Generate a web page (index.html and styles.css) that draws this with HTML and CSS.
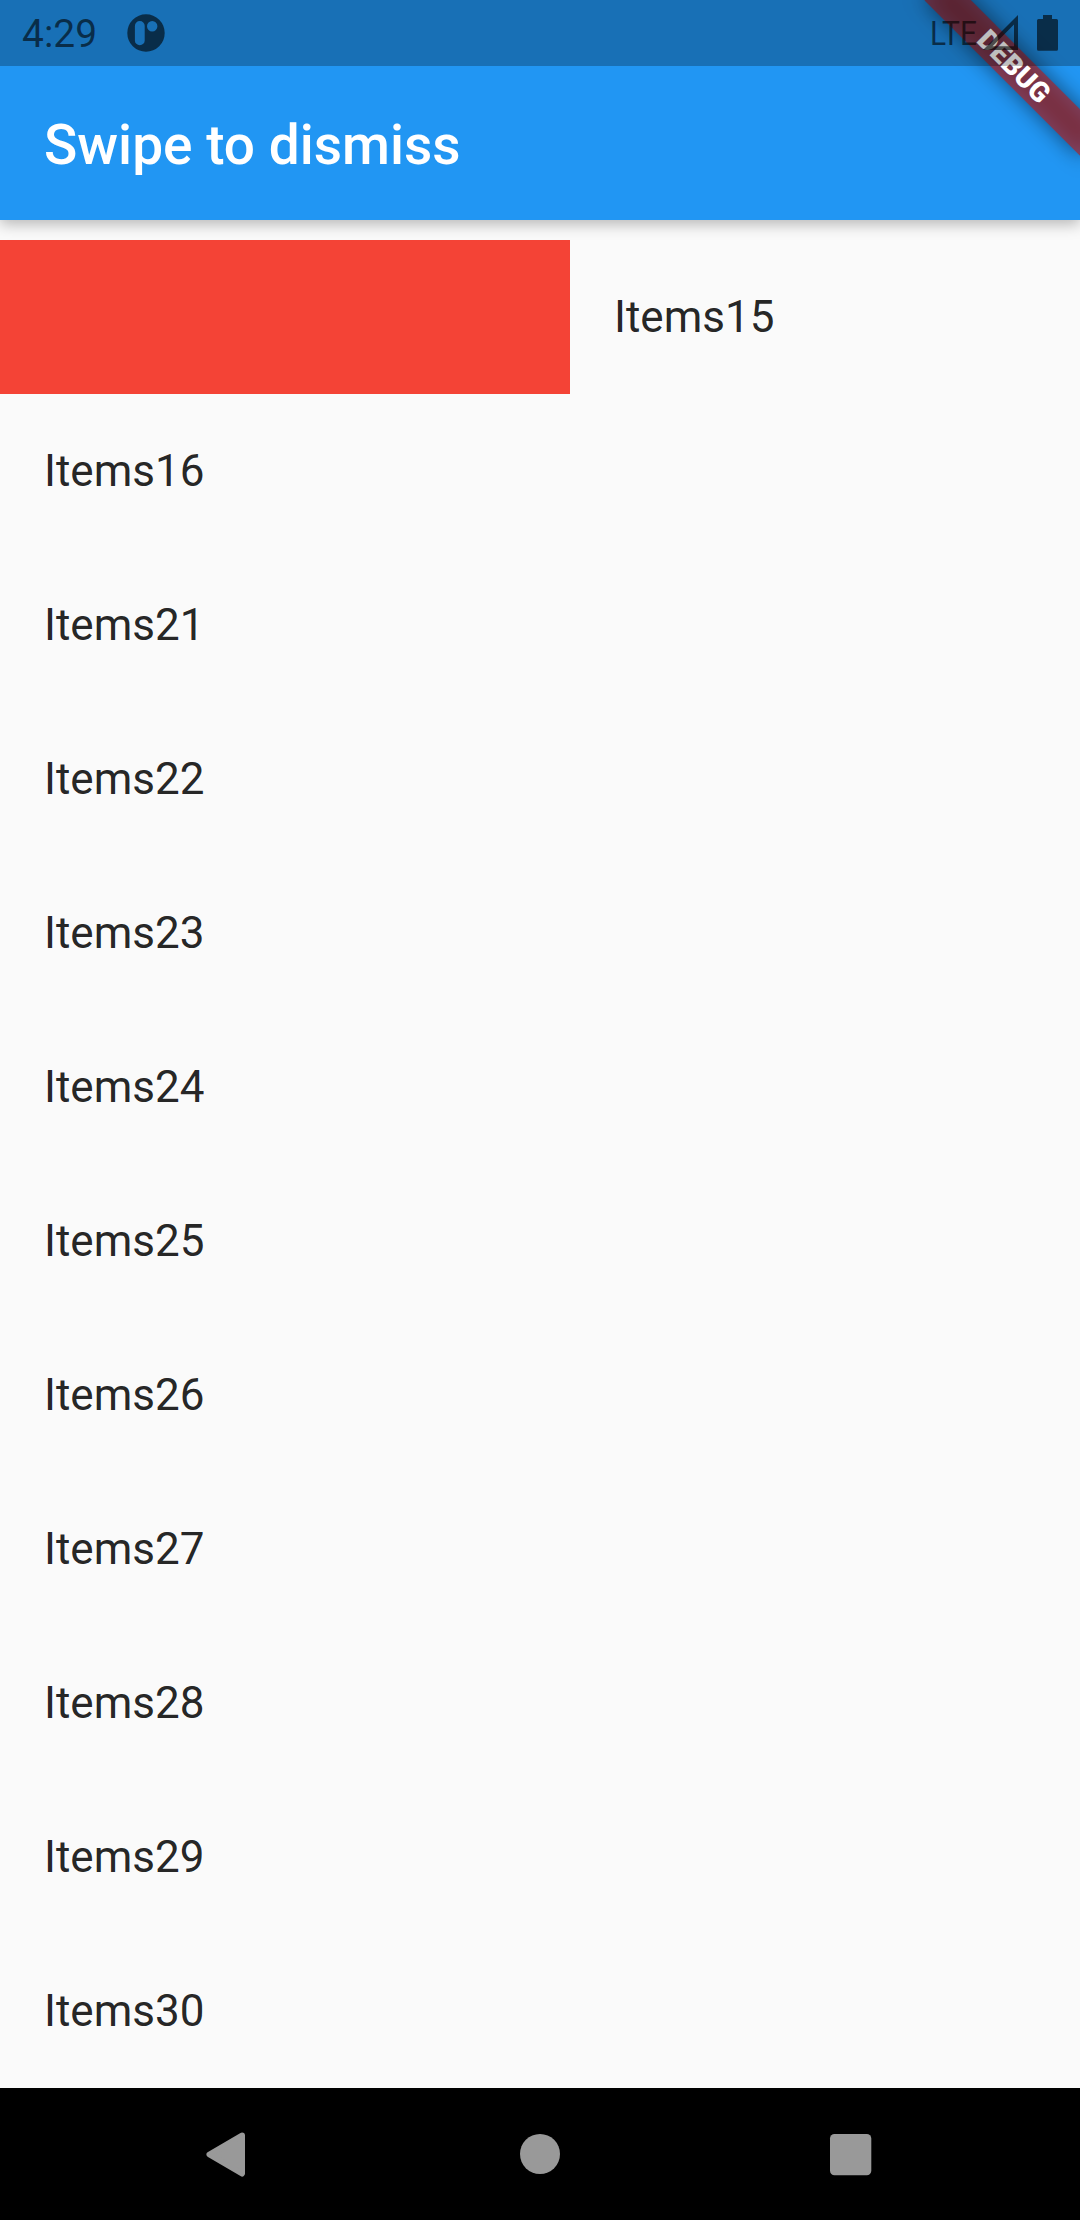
FILE: index.html
```html
<!DOCTYPE html>
<html lang="en">
<head>
<meta charset="utf-8">
<title>Swipe to dismiss</title>
<link rel="stylesheet" href="styles.css">
</head>
<body>
<div class="screen">
  <header class="app-header">
    <h1 class="title">Swipe to dismiss</h1>
  </header>

  <div class="banner-clip">
    <div class="banner"><span class="banner-text">DEBUG</span></div>
  </div>

  <div class="status-bar">
    <span class="clock">4:29</span>
    <svg class="app-icon" width="38" height="38" viewBox="0 0 38 38">
      <path fill-rule="evenodd" d="M19 .3a18.7 18.7 0 1 0 0 37.4a18.7 18.7 0 1 0 0-37.4zM12.8 7a4.9 4.9 0 0 1 4.9 4.9v14.5a4.9 4.9 0 0 1-9.8 0V11.9a4.9 4.9 0 0 1 4.9-4.9zM25.2 7a5.2 5.2 0 1 1 0 10.4a5.2 5.2 0 1 1 0-10.4z"/>
    </svg>
    <svg class="network" width="52" height="44" viewBox="0 0 52 44">
      <text x="0" y="33.5" textLength="47" lengthAdjust="spacingAndGlyphs">LTE</text>
    </svg>
    <svg class="signal" width="36" height="36" viewBox="0 0 36 36">
      <path fill-rule="evenodd" d="M0 35L35 0V35zM9.5 31.3H31V9.5z"/>
    </svg>
    <svg class="battery" width="21" height="36" viewBox="0 0 21 36">
      <path d="M6 0h9v4h4.5a1.5 1.5 0 0 1 1.5 1.5v28.7a1.5 1.5 0 0 1-1.5 1.5h-18a1.5 1.5 0 0 1-1.5-1.5V5.5a1.5 1.5 0 0 1 1.500-1.500H6z"/>
    </svg>
  </div>

  <main class="list">
    <div class="dismissible"><div class="dismiss-background"></div><div class="item">Items15</div></div>
    <div class="item">Items16</div>
    <div class="item">Items21</div>
    <div class="item">Items22</div>
    <div class="item">Items23</div>
    <div class="item">Items24</div>
    <div class="item">Items25</div>
    <div class="item">Items26</div>
    <div class="item">Items27</div>
    <div class="item">Items28</div>
    <div class="item">Items29</div>
    <div class="item">Items30</div>
  </main>

  <nav class="nav-bar">
    <svg width="60" height="60" viewBox="0 0 60 60"><path d="M42 11.500L9.500 30.500L42 49.500z" stroke-width="6" stroke-linejoin="round"/></svg>
    <svg width="60" height="60" viewBox="0 0 60 60"><circle cx="30" cy="30" r="20"/></svg>
    <svg width="60" height="60" viewBox="0 0 60 60"><rect x="10" y="10" width="41.300" height="41.300" rx="4.500"/></svg>
  </nav>
</div>
</body>
</html>
```
FILE: styles.css
```css
* { box-sizing: border-box; }

body {
  margin: 0;
  background: #fafafa;
  font-family: Roboto, "Liberation Sans", sans-serif;
}

.screen {
  position: relative;
  display: flex;
  flex-direction: column;
  width: 1080px;
  height: 2220px;
  overflow: hidden;
}

.app-header {
  display: flex;
  align-items: center;
  height: 220px;
  padding: 70px 44px 0;
  background: #2196f3;
  color: #fff;
  box-shadow: 0 4px 14px rgba(0, 0, 0, 0.28);
}

.title {
  margin: 0;
  font-size: 55px;
  font-weight: 500;
  line-height: 64px;
}

/* Translucent system bar drawn over the app */
.status-bar {
  position: absolute;
  top: 0;
  left: 0;
  display: flex;
  width: 1080px;
  height: 66px;
  padding: 0 22px;
  background: rgba(0, 0, 0, 0.25);
  color: rgba(0, 0, 0, 0.6);
  fill: rgba(0, 0, 0, 0.6);
}

.clock {
  width: 105px;
  font-size: 39px;
  line-height: 69px;
}

.app-icon { margin-top: 14px; }

.network {
  margin: 11px 1px 0 auto;
  font-size: 34px;
  overflow: visible;
}

.signal { margin: 15px 18px 0 0; }

.battery { margin-top: 15px; }

/* Corner ribbon */
.banner-clip {
  position: absolute;
  top: 0;
  right: 0;
  width: 300px;
  height: 300px;
  overflow: hidden;
}

.banner {
  position: absolute;
  top: 49.6px;
  left: 124px;
  width: 220px;
  height: 33px;
  transform: rotate(45deg);
}

.banner::before,
.banner::after {
  content: "";
  position: absolute;
  inset: 0;
}

.banner::before {
  background: rgba(0, 0, 0, 0.5);
  filter: blur(10.9px);
}

.banner::after { background: rgba(183, 28, 28, 0.627); }

.banner-text {
  position: relative;
  z-index: 1;
  display: block;
  color: #fff;
  font-size: 28px;
  font-weight: 900;
  line-height: 33px;
  text-align: center;
}

.list {
  flex: 1;
  padding-top: 20px;
}

.item {
  height: 154px;
  padding: 0 44px;
  color: rgba(0, 0, 0, 0.87);
  font-size: 44px;
  line-height: 154px;
}

.dismissible { display: flex; }

.dismiss-background {
  width: 570px;
  background: #f44336;
}

.nav-bar {
  display: flex;
  align-items: center;
  justify-content: center;
  gap: 250px;
  height: 132px;
  background: #000;
  fill: #999;
  stroke: #999;
  stroke-width: 0;
}
```
